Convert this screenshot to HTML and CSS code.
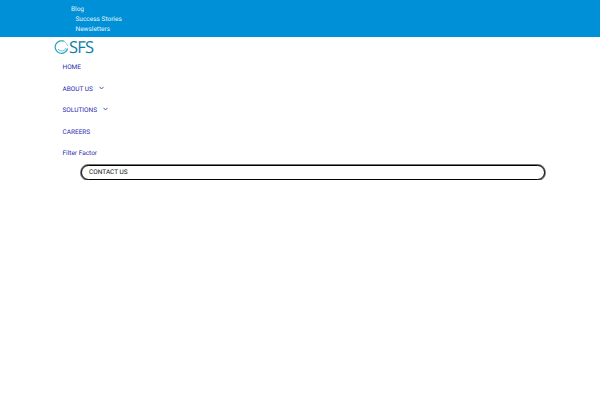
FILE: index.html
```html
<!DOCTYPE html>
<html lang="en">
<head>
<meta charset="utf-8">
<title>SFS</title>
<link rel="stylesheet" href="styles.css">
</head>
<body>
<header class="topbar">
  <ul class="top-list">
    <li>Blog
      <ul class="top-sub">
        <li>Success Stories</li>
        <li>Newsletters</li>
      </ul>
    </li>
  </ul>
</header>
<div class="logo">
  <svg class="logo-mark" width="15" height="15" viewBox="0 0 15 15" aria-hidden="true">
    <path d="M10.5 2.5A6.3 6.3 0 1 0 13.6 9.5" fill="none" stroke="#2a9fc4" stroke-width="1.2"/>
    <path d="M4 10A4.5 4.5 0 0 0 12 9" fill="none" stroke="#6cc3dc" stroke-width="1"/>
    <path d="M6 2.2A6 6 0 0 1 13.6 7" fill="none" stroke="#8fd2e6" stroke-width="1"/>
  </svg>
  <span class="logo-text">SFS</span>
</div>
<nav class="nav">
  <a class="nav-item">HOME</a>
  <a class="nav-item">ABOUT US
    <svg class="chev" width="5" height="4" viewBox="0 0 5 4" aria-hidden="true"><path d="M.5 .8 2.5 3 4.5 .8" fill="none" stroke="#55559a" stroke-width="1"/></svg>
  </a>
  <a class="nav-item">SOLUTIONS
    <svg class="chev" width="5" height="4" viewBox="0 0 5 4" aria-hidden="true"><path d="M.5 .8 2.5 3 4.5 .8" fill="none" stroke="#55559a" stroke-width="1"/></svg>
  </a>
  <a class="nav-item">CAREERS</a>
  <a class="nav-item">Filter Factor</a>
</nav>
<div class="contact">CONTACT US</div>
</body>
</html>
```
FILE: styles.css
```css
* { box-sizing: border-box; }
html, body { margin: 0; padding: 0; }
body { background: #fff; font-family: Roboto, "Liberation Sans", sans-serif; font-size: 6.5px; text-rendering: geometricPrecision; }
ul { list-style: none; margin: 0; padding: 0; }
.topbar { height: 37px; background: #0090d7; color: #e4f3fb; padding: 4px 0 0 71px; }
.top-sub { padding-left: 4.5px; }
.top-list > li { line-height: 10px; }
.logo { height: 20px; padding: 0 0 2px 54px; display: flex; align-items: center; }
.logo-mark { flex: none; }
.logo-text { font-family: "Open Sans", sans-serif; font-size: 16.5px; line-height: 17px; color: #0a7ea8; letter-spacing: -.8px; }
.nav { padding-left: 62.5px; display: flex; flex-direction: column; align-items: flex-start; }
.nav-item { height: 21.6px; line-height: 21.6px; color: #2b2bb0; display: block; }
.chev { margin-left: 4px; vertical-align: 1px; }
.contact { margin: 0 55px 0 81px; height: 15px; border: 1px solid #000; border-radius: 8px; box-shadow: 0 0 0 1px rgba(0,0,0,.55); background: #fff; color: #111; line-height: 13px; padding-left: 7px; }
```
